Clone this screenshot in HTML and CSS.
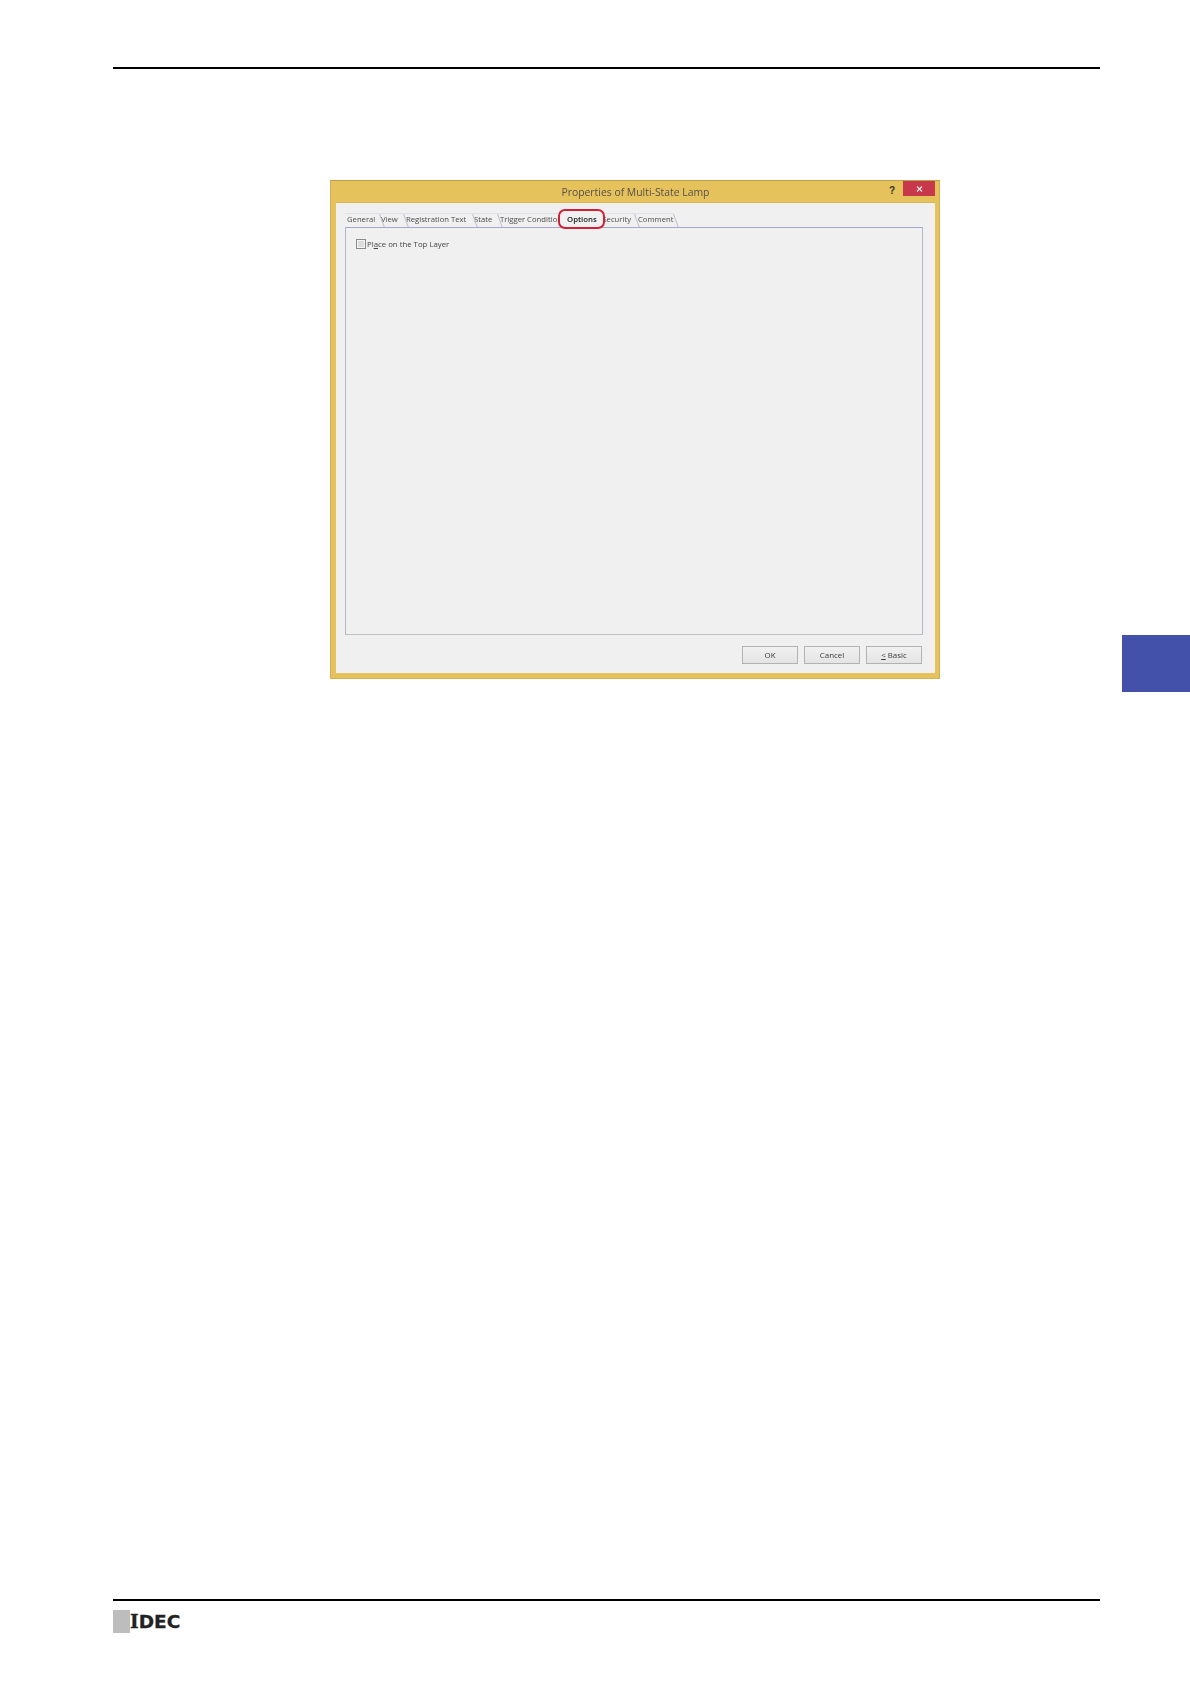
FILE: index.html
```html
<!DOCTYPE html>
<html lang="en">
<head>
<meta charset="utf-8">
<title>Properties of Multi-State Lamp</title>
<link rel="stylesheet" href="styles.css">
</head>
<body>
<div class="page">
  <header class="head-rule"></header>
  <main class="content">
    <section class="dialog">
      <div class="titlebar">
        <span class="title">Properties of Multi-State Lamp</span>
        <span class="help">?</span>
        <span class="close">
          <svg width="7" height="6" viewBox="0 0 7 6"><path d="M1 .5l5 5M6 .5l-5 5" stroke="#f6e6e8" stroke-width="1.1" fill="none"/></svg>
        </span>
      </div>
      <div class="client">
        <div class="tabs">
          <span class="tab t-general">General</span>
          <span class="tab t-view">View</span>
          <span class="tab t-reg">Registration Text</span>
          <span class="tab t-state">State</span>
          <span class="tab t-trig">Trigger Condition</span>
          <span class="tab t-opt">Options</span>
          <span class="tab t-sec"><span class="sec-text">Security</span></span>
          <span class="tab t-com">Comment</span>
          <span class="ring"></span>
        </div>
        <div class="panel">
          <label class="check"><span class="box"><span class="box-in"></span></span><span>Pl<u>a</u>ce on the Top Layer</span></label>
        </div>
        <div class="buttons">
          <span class="btn">OK</span>
          <span class="btn">Cancel</span>
          <span class="btn"><span><u>&lt;</u> Basic</span></span>
        </div>
      </div>
    </section>
  </main>
  <footer class="foot">
    <div class="logo"><span class="logo-mark"></span><span class="logo-text"><span class="logo-i">I</span>DEC</span></div>
  </footer>
  <div class="side-tab"></div>
</div>
</body>
</html>
```
FILE: styles.css
```css
* { box-sizing: border-box; }
html, body { margin: 0; padding: 0; background: #fff; }
.page {
  position: relative;
  width: 1190px;
  height: 1684px;
  padding: 67px 90px 0 113px;
  display: flex;
  flex-direction: column;
  overflow: hidden;
}
.head-rule { height: 2px; background: #000; flex: none; }
.content { flex: 1; padding: 111px 0 0 217px; }
.dialog {
  width: 610px;
  height: 499px;
  background: #e6c25c;
  border: 1px solid #d2b055;
  border-top-color: #bfa04a;
  padding: 0 4px 5px 5px;
  display: flex;
  flex-direction: column;
  font-family: "Open Sans", "Noto Sans", sans-serif;
  color: #333;
}
.titlebar {
  height: 21px;
  flex: none;
  display: flex;
  align-items: center;
  padding-left: 46px;
}
.title {
  flex: 1;
  text-align: center;
  font-size: 10.4px;
  color: #55504a;
}
.help {
  font: bold 10px "Liberation Sans", sans-serif;
  color: #333;
  margin-right: 8px;
  padding-bottom: 3px;
}
.close {
  width: 32px;
  height: 15px;
  margin: -6px 0 0 0;
  background: #c7384b;
  display: flex;
  align-items: center;
  justify-content: center;
}
.client {
  flex: 1;
  background: #f0f0f0;
  border-top: 1px solid #d9b653;
  padding: 5px 12px 0 9px;
  display: flex;
  flex-direction: column;
}
.tabs {
  height: 19px;
  flex: none;
  display: flex;
  position: relative;
  align-items: flex-end;
}
.tab {
  position: relative;
  height: 14px;
  line-height: 11px;
  font-size: 7.7px;
  color: #4a4a4a;
  white-space: nowrap;
  padding-left: 2px;
  border-top: 1px solid #e0e2e8;
}
.tab::before {
  content: "";
  position: absolute;
  top: 0;
  left: 0;
  height: 13px;
  width: 1px;
  background: #b9bec9;
  transform: skewX(20deg);
  transform-origin: top;
}
.t-general { width: 34px; }
.t-general::before { display: none; }
.t-view { width: 24px; }
.t-reg { width: 69px; padding-left: 3px; }
.t-state { width: 25px; padding-left: 2px; }
.t-trig { width: 61px; padding-left: 3px; }
.t-opt {
  width: 47px;
  padding-left: 9px;
  color: #222;
  font-weight: 600;
  font-size: 7.8px;
  z-index: 2;
  border-top-color: transparent;
}
.t-opt::before { display: none; }
.t-sec { width: 29px; padding: 0 3px 0 0; display: flex; justify-content: flex-end; }
.sec-text { flex: none; }
.t-sec::before { display: none; }
.t-com { width: 40px; padding-left: 4px; }
.t-com::after {
  content: "";
  position: absolute;
  top: 0;
  right: 0;
  height: 13px;
  width: 1px;
  background: #b9bec9;
  transform: skewX(20deg);
  transform-origin: top;
}
.tab, .title, .check span { filter: blur(.3px); }
.ring {
  position: absolute;
  z-index: 1;
  left: 213px;
  top: 1px;
  width: 47px;
  height: 20px;
  background: #f0f0f0;
  border: 2px solid #cf2137;
  border-radius: 7px;
}
.panel {
  height: 408px;
  flex: none;
  border: 1px solid #b4b7cc;
  border-top-color: #a4a8cc;
  border-bottom-color: #bdbdc2;
  padding: 11px 0 0 10px;
}
.check {
  display: flex;
  align-items: center;
  gap: 1px;
  font-size: 7.8px;
  color: #444;
  height: 10px;
}
.box {
  width: 10px;
  height: 10px;
  border: 1px solid #8b8b8b;
  background: #f4f4f4;
  padding: 1px;
  flex: none;
}
.box-in { display: block; width: 100%; height: 100%; background: #dcdcdc; }
.buttons {
  display: flex;
  justify-content: flex-end;
  gap: 6px;
  margin-top: 11px;
  padding-right: 1px;
}
.btn {
  width: 56px;
  height: 18px;
  border: 1px solid #b2b2b2;
  background: linear-gradient(#f1f1f1, #e4e4e4);
  display: flex;
  align-items: center;
  justify-content: center;
  font-size: 7.9px;
  color: #3a3a3a;
  padding-bottom: 1px;
  filter: blur(.2px);
}
.foot { flex: none; height: 85px; border-top: 2px solid #000; padding-top: 9px; }
.logo { display: flex; align-items: center; }
.logo-mark { width: 17px; height: 23px; background: #bdbdbd; flex: none; }
.logo-text {
  font: bold 18.5px/23px "DejaVu Sans", sans-serif;
  color: #222;
  -webkit-text-stroke: .3px #222;
}
.logo-i { font-family: "DejaVu Serif", serif; }
.side-tab {
  position: absolute;
  left: 1122px;
  top: 635px;
  width: 68px;
  height: 57px;
  background: #4351aa;
}
```
